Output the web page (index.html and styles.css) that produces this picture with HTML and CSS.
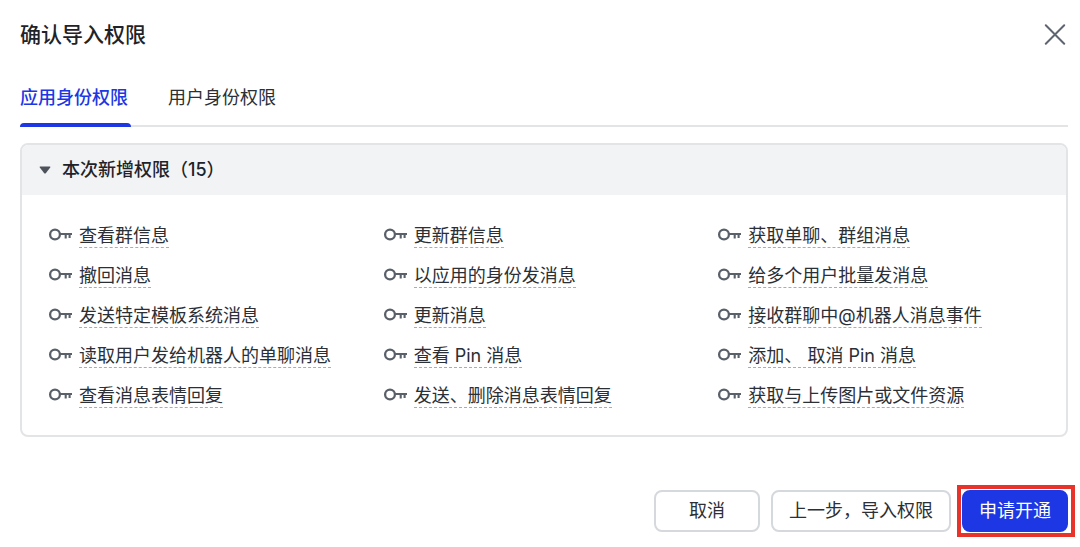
FILE: index.html
```html
<!DOCTYPE html>
<html lang="zh-CN">
<head>
<meta charset="utf-8">
<meta name="viewport" content="width=device-width, initial-scale=1">
<title>确认导入权限</title>
<link rel="stylesheet" href="styles.css">
</head>
<body>
<svg class="sprite" aria-hidden="true">
  <symbol id="key" viewBox="0 0 24 18">
    <circle cx="7" cy="7.5" r="4.9" fill="none" stroke="currentColor" stroke-width="2.3"/>
    <path d="M11.8 7H24M17.7 7V11.6M21.6 7V11" fill="none" stroke="currentColor" stroke-width="2.1"/>
  </symbol>
</svg>
<main class="dialog">
  <header class="dialog-header">
    <h1 class="dialog-title">确认导入权限</h1>
    <button class="close" type="button" aria-label="关闭">
      <svg class="close-icon" viewBox="0 0 22 22" aria-hidden="true"><path d="M1.8 1.3 20.2 19.7M20.2 1.3 1.8 19.7" fill="none" stroke="currentColor" stroke-width="2" stroke-linecap="round"/></svg>
    </button>
  </header>
  <div class="tabs" role="tablist">
    <button class="tab tab-active" type="button" role="tab" aria-selected="true">应用身份权限</button>
    <button class="tab" type="button" role="tab" aria-selected="false">用户身份权限</button>
  </div>
  <section class="panel">
    <button class="panel-header" type="button" aria-expanded="true">
      <svg class="caret" viewBox="0 0 12 8" aria-hidden="true"><path d="M1.2.5H10.8Q11.8.7 11.2 1.6L6.8 7.2Q6 8 5.2 7.2L.8 1.6Q.2.7 1.2.5Z" fill="currentColor"/></svg>
      <span>本次新增权限（15）</span>
    </button>
    <ul class="scopes">
      <li class="scope"><svg class="key"><use href="#key"/></svg><span class="scope-name">查看群信息</span></li>
      <li class="scope"><svg class="key"><use href="#key"/></svg><span class="scope-name">更新群信息</span></li>
      <li class="scope"><svg class="key"><use href="#key"/></svg><span class="scope-name">获取单聊、群组消息</span></li>
      <li class="scope"><svg class="key"><use href="#key"/></svg><span class="scope-name">撤回消息</span></li>
      <li class="scope"><svg class="key"><use href="#key"/></svg><span class="scope-name">以应用的身份发消息</span></li>
      <li class="scope"><svg class="key"><use href="#key"/></svg><span class="scope-name">给多个用户批量发消息</span></li>
      <li class="scope"><svg class="key"><use href="#key"/></svg><span class="scope-name">发送特定模板系统消息</span></li>
      <li class="scope"><svg class="key"><use href="#key"/></svg><span class="scope-name">更新消息</span></li>
      <li class="scope"><svg class="key"><use href="#key"/></svg><span class="scope-name">接收群聊中@机器人消息事件</span></li>
      <li class="scope"><svg class="key"><use href="#key"/></svg><span class="scope-name">读取用户发给机器人的单聊消息</span></li>
      <li class="scope"><svg class="key"><use href="#key"/></svg><span class="scope-name">查看 Pin 消息</span></li>
      <li class="scope"><svg class="key"><use href="#key"/></svg><span class="scope-name">添加、 取消 Pin 消息</span></li>
      <li class="scope"><svg class="key"><use href="#key"/></svg><span class="scope-name">查看消息表情回复</span></li>
      <li class="scope"><svg class="key"><use href="#key"/></svg><span class="scope-name">发送、删除消息表情回复</span></li>
      <li class="scope"><svg class="key"><use href="#key"/></svg><span class="scope-name">获取与上传图片或文件资源</span></li>
    </ul>
  </section>
  <footer class="actions">
    <button class="btn" type="button">取消</button>
    <button class="btn" type="button">上一步，导入权限</button>
    <div class="highlight"><button class="btn btn-primary" type="button">申请开通</button></div>
  </footer>
</main>
</body>
</html>
```
FILE: styles.css
```css
* {
  box-sizing: border-box;
}

body {
  margin: 0;
  background: #fff;
  color: #2b2f36;
  font: 18px/24px Inter, "Noto Sans CJK SC", sans-serif;
}

button {
  font: inherit;
  color: inherit;
  background: none;
  border: 0;
  padding: 0;
  cursor: pointer;
}

.sprite {
  display: none;
}

.dialog {
  padding: 20px 12px 8px 20px;
}

.dialog-header {
  display: flex;
  align-items: center;
  justify-content: space-between;
}

.dialog-title {
  margin: 0;
  font-size: 21px;
  line-height: 30px;
  font-weight: 500;
  color: #1f2329;
}

.close {
  display: flex;
  padding: 4px 2px;
  color: #5f6570;
}

.close-icon {
  width: 22px;
  height: 22px;
}

.tabs {
  display: flex;
  gap: 37px;
  margin-top: 36px;
  border-bottom: 2px solid #e3e4e6;
}

.tab {
  position: relative;
  min-width: 111px;
  margin-bottom: -2px;
  padding-bottom: 17px;
  text-align: left;
}

.tab-active {
  color: #1c37e3;
  font-weight: 500;
}

.tab-active::after {
  content: "";
  position: absolute;
  right: 0;
  bottom: 0;
  left: 0;
  height: 4px;
  border-radius: 4px 4px 0 0;
  background: #1c37e3;
}

.panel {
  margin-top: 16px;
  border: 2px solid #e3e4e6;
  border-radius: 8px;
  overflow: hidden;
}

.panel-header {
  display: flex;
  align-items: center;
  gap: 11px;
  width: 100%;
  padding: 13px 17px;
  background: #f2f3f5;
  color: #1f2329;
  font-weight: 500;
}

.caret {
  width: 12px;
  height: 8px;
  color: #4e535b;
}

.scopes {
  display: grid;
  grid-template-columns: repeat(3, 1fr);
  row-gap: 15px;
  margin: 0;
  padding: 28px 14px 27px 26px;
  list-style: none;
}

.scope {
  display: flex;
  align-items: center;
  gap: 7px;
}

.key {
  flex: none;
  width: 24px;
  height: 18px;
  color: #5a6069;
}

.scope-name {
  padding-top: 2px;
  border-bottom: 1px dashed #a9adb3;
  line-height: 22px;
  white-space: nowrap;
}

.actions {
  display: flex;
  align-items: center;
  justify-content: flex-end;
  gap: 11px;
  margin-top: 48px;
  margin-right: -7px;
}

.btn {
  min-width: 106px;
  padding: 7px 16px;
  border: 2px solid #d5d8dc;
  border-radius: 8px;
}

.highlight {
  margin-left: -5px;
  padding: 1px 3px 1px 1px;
  border: 4px solid #e8332a;
}

.btn-primary {
  display: block;
  padding-right: 15px;
  padding-left: 15px;
  border-color: #1c37e3;
  background: #1c37e3;
  color: #fff;
}
```
